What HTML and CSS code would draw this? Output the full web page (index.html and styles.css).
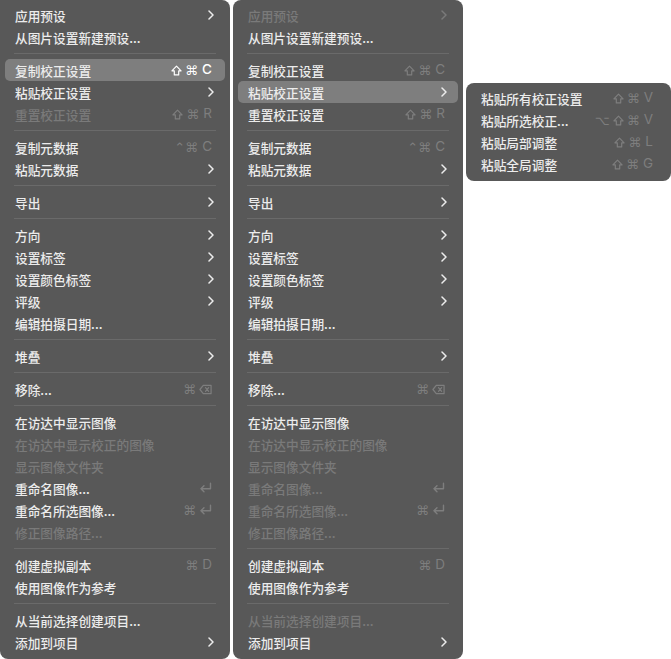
FILE: index.html
```html
<!DOCTYPE html>
<html lang="zh-CN">
<head>
    <meta charset="UTF-8">
    <title>菜单</title>
    <link rel="stylesheet" href="styles.css">
</head>
<body>

<div class="wrap">

    <!-- 第一个菜单: 复制校正设置 -->
    <div class="menu first">
        <div class="item">应用预设<svg class="arrow" viewBox="0 0 6 10"><polyline points="1,1 5,5 1,9"/></svg></div>
        <div class="item">从图片设置新建预设...</div>
        <div class="sep"></div>
        <div class="item hi">复制校正设置<span class="key"><svg class="ico shift" viewBox="0 0 12 12"><path d="M6 1.2 L11 6.4 H8.4 V10.8 H3.6 V6.4 H1 Z"/></svg>⌘<b>C</b></span></div>
        <div class="item">粘贴校正设置<svg class="arrow" viewBox="0 0 6 10"><polyline points="1,1 5,5 1,9"/></svg></div>
        <div class="item off">重置校正设置<span class="key"><svg class="ico shift" viewBox="0 0 12 12"><path d="M6 1.2 L11 6.4 H8.4 V10.8 H3.6 V6.4 H1 Z"/></svg>⌘<b>R</b></span></div>
        <div class="sep"></div>
        <div class="item">复制元数据<span class="key">⌃⌘<b>C</b></span></div>
        <div class="item">粘贴元数据<svg class="arrow" viewBox="0 0 6 10"><polyline points="1,1 5,5 1,9"/></svg></div>
        <div class="sep"></div>
        <div class="item">导出<svg class="arrow" viewBox="0 0 6 10"><polyline points="1,1 5,5 1,9"/></svg></div>
        <div class="sep"></div>
        <div class="item">方向<svg class="arrow" viewBox="0 0 6 10"><polyline points="1,1 5,5 1,9"/></svg></div>
        <div class="item">设置标签<svg class="arrow" viewBox="0 0 6 10"><polyline points="1,1 5,5 1,9"/></svg></div>
        <div class="item">设置颜色标签<svg class="arrow" viewBox="0 0 6 10"><polyline points="1,1 5,5 1,9"/></svg></div>
        <div class="item">评级<svg class="arrow" viewBox="0 0 6 10"><polyline points="1,1 5,5 1,9"/></svg></div>
        <div class="item">编辑拍摄日期...</div>
        <div class="sep"></div>
        <div class="item">堆叠<svg class="arrow" viewBox="0 0 6 10"><polyline points="1,1 5,5 1,9"/></svg></div>
        <div class="sep"></div>
        <div class="item">移除...<span class="key">⌘<svg class="ico del" viewBox="0 0 14 11"><path d="M4.6 1 H13 V10 H4.6 L1 5.5 Z M7 3.5 L10.4 7.5 M10.4 3.5 L7 7.5"/></svg></span></div>
        <div class="sep"></div>
        <div class="item">在访达中显示图像</div>
        <div class="item off">在访达中显示校正的图像</div>
        <div class="item off">显示图像文件夹</div>
        <div class="item">重命名图像...<span class="key"><svg class="ico ret" viewBox="0 0 12 11"><path d="M10.6 1 V6.2 H1.8 M4.6 3.4 L1.8 6.2 L4.6 9"/></svg></span></div>
        <div class="item">重命名所选图像...<span class="key">⌘<svg class="ico ret" viewBox="0 0 12 11"><path d="M10.6 1 V6.2 H1.8 M4.6 3.4 L1.8 6.2 L4.6 9"/></svg></span></div>
        <div class="item off">修正图像路径...</div>
        <div class="sep"></div>
        <div class="item">创建虚拟副本<span class="key">⌘<b>D</b></span></div>
        <div class="item">使用图像作为参考</div>
        <div class="sep"></div>
        <div class="item">从当前选择创建项目...</div>
        <div class="item">添加到项目<svg class="arrow" viewBox="0 0 6 10"><polyline points="1,1 5,5 1,9"/></svg></div>
    </div>

    <!-- 第二个菜单: 粘贴校正设置 -->
    <div class="menu">
        <div class="item off">应用预设<svg class="arrow" viewBox="0 0 6 10"><polyline points="1,1 5,5 1,9"/></svg></div>
        <div class="item">从图片设置新建预设...</div>
        <div class="sep"></div>
        <div class="item">复制校正设置<span class="key"><svg class="ico shift" viewBox="0 0 12 12"><path d="M6 1.2 L11 6.4 H8.4 V10.8 H3.6 V6.4 H1 Z"/></svg>⌘<b>C</b></span></div>
        <div class="item hi">粘贴校正设置<svg class="arrow" viewBox="0 0 6 10"><polyline points="1,1 5,5 1,9"/></svg></div>
        <div class="item">重置校正设置<span class="key"><svg class="ico shift" viewBox="0 0 12 12"><path d="M6 1.2 L11 6.4 H8.4 V10.8 H3.6 V6.4 H1 Z"/></svg>⌘<b>R</b></span></div>
        <div class="sep"></div>
        <div class="item">复制元数据<span class="key">⌃⌘<b>C</b></span></div>
        <div class="item">粘贴元数据<svg class="arrow" viewBox="0 0 6 10"><polyline points="1,1 5,5 1,9"/></svg></div>
        <div class="sep"></div>
        <div class="item">导出<svg class="arrow" viewBox="0 0 6 10"><polyline points="1,1 5,5 1,9"/></svg></div>
        <div class="sep"></div>
        <div class="item">方向<svg class="arrow" viewBox="0 0 6 10"><polyline points="1,1 5,5 1,9"/></svg></div>
        <div class="item">设置标签<svg class="arrow" viewBox="0 0 6 10"><polyline points="1,1 5,5 1,9"/></svg></div>
        <div class="item">设置颜色标签<svg class="arrow" viewBox="0 0 6 10"><polyline points="1,1 5,5 1,9"/></svg></div>
        <div class="item">评级<svg class="arrow" viewBox="0 0 6 10"><polyline points="1,1 5,5 1,9"/></svg></div>
        <div class="item">编辑拍摄日期...</div>
        <div class="sep"></div>
        <div class="item">堆叠<svg class="arrow" viewBox="0 0 6 10"><polyline points="1,1 5,5 1,9"/></svg></div>
        <div class="sep"></div>
        <div class="item">移除...<span class="key">⌘<svg class="ico del" viewBox="0 0 14 11"><path d="M4.6 1 H13 V10 H4.6 L1 5.5 Z M7 3.5 L10.4 7.5 M10.4 3.5 L7 7.5"/></svg></span></div>
        <div class="sep"></div>
        <div class="item">在访达中显示图像</div>
        <div class="item off">在访达中显示校正的图像</div>
        <div class="item off">显示图像文件夹</div>
        <div class="item off">重命名图像...<span class="key"><svg class="ico ret" viewBox="0 0 12 11"><path d="M10.6 1 V6.2 H1.8 M4.6 3.4 L1.8 6.2 L4.6 9"/></svg></span></div>
        <div class="item off">重命名所选图像...<span class="key">⌘<svg class="ico ret" viewBox="0 0 12 11"><path d="M10.6 1 V6.2 H1.8 M4.6 3.4 L1.8 6.2 L4.6 9"/></svg></span></div>
        <div class="item off">修正图像路径...</div>
        <div class="sep"></div>
        <div class="item">创建虚拟副本<span class="key">⌘<b>D</b></span></div>
        <div class="item">使用图像作为参考</div>
        <div class="sep"></div>
        <div class="item off">从当前选择创建项目...</div>
        <div class="item">添加到项目<svg class="arrow" viewBox="0 0 6 10"><polyline points="1,1 5,5 1,9"/></svg></div>
    </div>

    <!-- 子菜单 -->
    <div class="menu sub">
        <div class="item">粘贴所有校正设置<span class="key"><svg class="ico shift" viewBox="0 0 12 12"><path d="M6 1.2 L11 6.4 H8.4 V10.8 H3.6 V6.4 H1 Z"/></svg>⌘<b>V</b></span></div>
        <div class="item">粘贴所选校正...<span class="key">⌥<svg class="ico shift" viewBox="0 0 12 12"><path d="M6 1.2 L11 6.4 H8.4 V10.8 H3.6 V6.4 H1 Z"/></svg>⌘<b>V</b></span></div>
        <div class="item">粘贴局部调整<span class="key"><svg class="ico shift" viewBox="0 0 12 12"><path d="M6 1.2 L11 6.4 H8.4 V10.8 H3.6 V6.4 H1 Z"/></svg>⌘<b>L</b></span></div>
        <div class="item">粘贴全局调整<span class="key"><svg class="ico shift" viewBox="0 0 12 12"><path d="M6 1.2 L11 6.4 H8.4 V10.8 H3.6 V6.4 H1 Z"/></svg>⌘<b>G</b></span></div>
    </div>

</div>

</body>
</html>
```

FILE: styles.css
```css
html,
body {
    margin: 0;
    background: #fff;
    overflow: hidden;
    font-family: "Noto Sans CJK SC", sans-serif;
    font-size: 12.7px;
}

.wrap {
    display: flex;
    align-items: flex-start;
    gap: 3px;
}

.menu {
    background: #585858;
    color: #ececec;
    width: 230px;
    flex: none;
    padding: 4px 0 6px;
    border-radius: 8px;
}
.menu.first {
    border-top-left-radius: 0;
}
.menu.sub {
    width: 205px;
    margin-top: 83px;
}

/* 每一行 */
.item {
    height: 22px;
    margin: 0 5px;
    padding: 0 13px 0 10px;
    display: flex;
    align-items: center;
    justify-content: space-between;
    border-radius: 5px;
    font-weight: 500;
    white-space: nowrap;
}
.item.hi {
    background: #7e7e7e;
}
.item.off {
    color: #7a7a7a;
}

.sep {
    height: 11px;
    display: flex;
    align-items: center;
    margin: 0 14px;
}
.sep::after {
    content: '';
    flex: 1;
    height: 1px;
    background: #6a6a6a;
}

/* 快捷键 */
.key {
    display: flex;
    align-items: center;
    gap: 3px;
    color: #7e7e7e;
    font-family: "DejaVu Sans", sans-serif;
    font-size: 13px;
    line-height: 1;
}
.key b {
    font-family: "Inter", "Liberation Sans", sans-serif;
    font-weight: 400;
    font-size: 13.5px;
    margin-left: 1px;
}
.item.hi .key {
    color: #fff;
}
.item.hi .key b {
    font-weight: 500;
}

.ico {
    fill: none;
    stroke: currentColor;
    stroke-width: 1.3;
    stroke-linejoin: round;
    stroke-linecap: round;
}
.ico.shift {
    width: 11px;
    height: 11px;
}
.ico.del {
    width: 13px;
    height: 11px;
}
.ico.ret {
    width: 13px;
    height: 12px;
}

.arrow {
    width: 6px;
    height: 10px;
    margin-right: -2px;
    fill: none;
    stroke: currentColor;
    stroke-width: 1.5;
    stroke-linecap: round;
    stroke-linejoin: round;
}
```
